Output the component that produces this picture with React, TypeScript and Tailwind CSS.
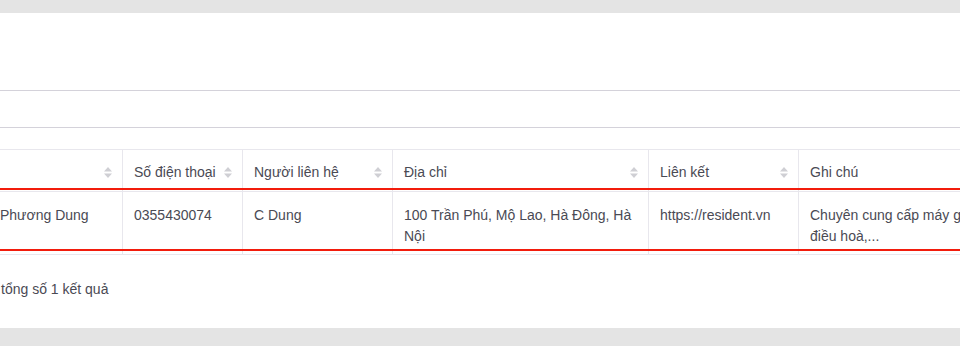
import React from 'react';

const SortIcon = () => (
	<svg width="8" height="11" viewBox="0 0 8 11" className="shrink-0">
		<path d="M4 0 L8 4.5 L0 4.5 Z" fill="#cfcfd4" />
		<path d="M0 6.5 L8 6.5 L4 11 Z" fill="#cfcfd4" />
	</svg>
);

const columns = [
	{ title: '', width: 'w-[123px]', sort: true, first: true },
	{ title: 'Số điện thoại', width: 'w-[120px]', sort: true },
	{ title: 'Người liên hệ', width: 'w-[150px]', sort: true },
	{ title: 'Địa chỉ', width: 'w-[256px]', sort: true },
	{ title: 'Liên kết', width: 'w-[150px]', sort: true },
	{ title: 'Ghi chú', width: 'w-[240px]', sort: false },
];

const App = () => {
	return (
		<div
			className="w-[960px] h-[346px] overflow-hidden bg-[#e4e4e4] text-[14px] text-[#4a4a54]"
			style={{ fontFamily: '"Liberation Sans", Arial, sans-serif' }}
		>
			<div className="h-[13px]" />
			<div className="bg-white h-[315px] flex flex-col">
				{/* title area */}
				<div className="h-[78px] border-b border-[#d4d2da]" />
				<div className="h-[37px] border-b border-[#d4d2da]" />
				<div className="h-[21px]" />

				{/* table */}
				<div className="relative w-[1100px]">
					<div className="flex h-[43px] border-y border-[#e8e7ed]">
						{columns.map((c, i) => (
							<div
								key={i}
								className={`${c.width} shrink-0 flex items-center justify-between border-r border-[#e8e7ed] ${c.first ? 'pl-0' : 'pl-[11px]'} pr-[10px] pt-[4px]`}
							>
								<span>{c.title}</span>
								{c.sort && <SortIcon />}
							</div>
						))}
					</div>
					<div className="flex h-[63px] border-b border-[#e8e7ed] leading-[21px]">
						<div className="w-[123px] shrink-0 border-r border-[#e8e7ed] pt-[13px] whitespace-nowrap">
							Phương Dung
						</div>
						<div className="w-[120px] shrink-0 border-r border-[#e8e7ed] pl-[11px] pt-[13px]">
							0355430074
						</div>
						<div className="w-[150px] shrink-0 border-r border-[#e8e7ed] pl-[11px] pt-[13px]">
							C Dung
						</div>
						<div className="w-[256px] shrink-0 border-r border-[#e8e7ed] pl-[11px] pt-[13px] whitespace-nowrap">
							100 Trần Phú, Mộ Lao, Hà Đông, Hà
							<br />
							Nội
						</div>
						<div className="w-[150px] shrink-0 border-r border-[#e8e7ed] pl-[11px] pt-[13px]">
							https://resident.vn
						</div>
						<div className="w-[240px] shrink-0 border-r border-[#e8e7ed] pl-[11px] pt-[13px] whitespace-nowrap">
							Chuyên cung cấp máy giặt,
							<br />
							điều hoà,...
						</div>
					</div>
					{/* highlighted row outline */}
					<div className="absolute left-0 right-0 top-[39px] h-[63px] border-y-2 border-[#f21c0c] pointer-events-none" />
				</div>

				<div className="mt-[24px] leading-[21px] pl-px">tổng số 1 kết quả</div>
			</div>
		</div>
	);
};

export default App;
